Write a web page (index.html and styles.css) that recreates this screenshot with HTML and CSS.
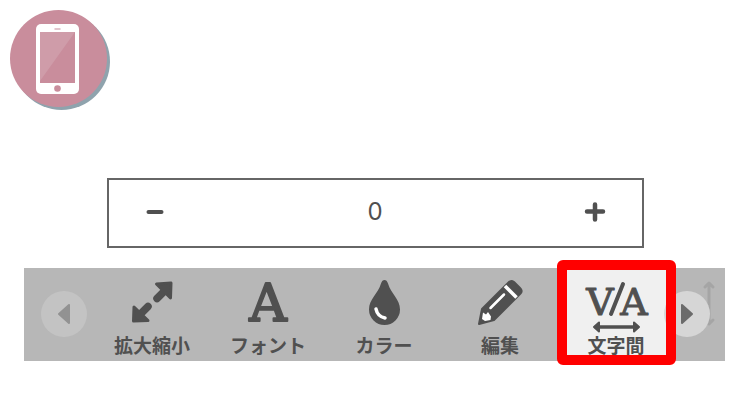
FILE: index.html
```html
<!DOCTYPE html>
<html lang="ja">
<head>
  <meta charset="UTF-8">
  <title>文字間</title>
  <link rel="stylesheet" href="styles.css">
</head>
<body>
  <header class="header">
    <svg class="logo" viewBox="0 0 100 100" aria-hidden="true">
      <circle cx="51.500" cy="51.500" r="48.500" fill="#8fa3ad"/>
      <circle cx="48.500" cy="48.500" r="48.500" fill="#c98d9c"/>
      <rect x="26" y="14" width="43" height="70" rx="5" fill="#fff"/>
      <rect x="30" y="22" width="35" height="51" fill="#c98d9c"/>
      <path d="M30 22h35L30 71z" fill="#cf9ca9"/>
      <path d="M45 19h5" stroke="#d9b3bd" stroke-width="1.500" stroke-linecap="round"/>
      <circle cx="47.500" cy="78.500" r="3.300" fill="#c98d9c"/>
    </svg>
  </header>

  <main>
    <div class="stepper">
      <button class="step" type="button" aria-label="狭くする">
        <svg width="22" height="22" viewBox="0 0 22 22"><path d="M4.500 11h13" stroke-width="4"/></svg>
      </button>
      <output class="value">0</output>
      <button class="step" type="button" aria-label="広くする">
        <svg width="22" height="22" viewBox="0 0 22 22"><path d="M3 10.500h16M11 3.500v15" stroke-width="4.500"/></svg>
      </button>
    </div>

    <nav class="toolbar">
      <button class="arrow prev" type="button" aria-label="前へ">
        <svg width="46" height="46" viewBox="0 0 46 46"><path d="M18 23L28 14v18z"/></svg>
      </button>

      <button class="tool" type="button">
        <svg class="icon" viewBox="0 0 64 54" aria-hidden="true">
          <path d="M37 19.500L45 11.500M28 27.500L20 35.500" stroke-width="7.500"/>
          <path class="solid" d="M36.500 5L51 4L50.500 19zM14 28L13.500 42L28 41.500z" stroke-width="3"/>
        </svg>
        <span class="label">拡大縮小</span>
      </button>

      <button class="tool" type="button">
        <svg class="icon" viewBox="0 0 64 54" aria-hidden="true">
          <text class="letter" x="32" y="42" font-size="52" stroke-width="2">A</text>
        </svg>
        <span class="label">フォント</span>
      </button>

      <button class="tool" type="button">
        <svg class="icon" viewBox="0 0 64 54" aria-hidden="true">
          <path class="fill" d="M32.500 1C31 1 29.800 2 29 4.500C26 15 17 20 17 30.500A15.500 15.500 0 0 0 48 30.500C48 20 39 15 36 4.500C35.200 2 34 1 32.500 1z"/>
          <path class="light" d="M24 30Q25.500 37.500 33 39" stroke-width="3.500"/>
        </svg>
        <span class="label">カラー</span>
      </button>

      <button class="tool" type="button">
        <svg class="icon" viewBox="0 0 64 54" aria-hidden="true">
          <path class="solid" d="M11 45L14 30L40.500 3.500Q43 1 46 3L52 9Q55 12 52.500 14.500L26 41z" stroke-width="2"/>
          <path class="light butt" d="M37 7L48.500 18.500" stroke-width="3.500"/>
          <path class="light" d="M22.500 29L36 15.500" stroke-width="2.500"/>
          <path class="light-fill" d="M15 33.500L18 35.500L20 33L23 37.500L22.500 41L17 42L14 40z"/>
        </svg>
        <span class="label">編集</span>
      </button>

      <button class="tool selected" type="button" aria-pressed="true">
        <svg class="icon" viewBox="0 0 64 54" aria-hidden="true">
          <text class="letter" x="16" y="36" font-size="38" stroke-width="1">V</text>
          <text class="letter" x="50" y="36" font-size="38" stroke-width="1">A</text>
          <path d="M27 35L39 5" stroke-width="4"/>
          <path d="M12 48H53" stroke-width="3.500"/>
          <path class="solid" d="M10 48L15 43.500v9zM55 48L50 43.500v9z" stroke-width="2"/>
        </svg>
        <span class="label">文字間</span>
      </button>

      <button class="tool more" type="button" aria-label="行間">
        <svg width="16" height="54" viewBox="0 0 16 54"><path d="M8 5v38M4 8l4-4 4 4M4 41l4 4 4-4" stroke-width="3"/></svg>
      </button>

      <button class="arrow next" type="button" aria-label="次へ">
        <svg width="46" height="46" viewBox="0 0 46 46"><path d="M28 23L18 14v18z"/></svg>
      </button>
    </nav>
  </main>
</body>
</html>
```
FILE: styles.css
```css
body {
  margin: 0;
  padding-bottom: 38px;
  background-color: #fff;
  color: #505050;
  font-family: "Noto Sans CJK JP", sans-serif;
}

button {
  padding: 0;
  border: 0;
  background: none;
  color: inherit;
  font: inherit;
  cursor: pointer;
}

svg {
  display: block;
  overflow: visible;
  fill: none;
  stroke: currentColor;
  stroke-linecap: round;
  stroke-linejoin: round;
}

.header {
  padding: 10px;
}

.logo {
  width: 100px;
  stroke: none;
}

/* 数値の増減 */
.stepper {
  display: flex;
  justify-content: space-between;
  align-items: center;
  margin: 58px 106px 0 107px;
  padding: 15px 36px 17px 35px;
  border: 2px solid #666;
}

.step {
  padding: 6px 0;
}

.value {
  font-family: Inter, sans-serif;
  font-size: 24px;
  line-height: 32px;
}

/* ツールバー */
.toolbar {
  position: relative;
  display: flex;
  margin: 20px 25px 0 24px;
  padding-left: 70px;
  background-color: #b7b7b7;
}

.tool {
  position: relative;
  display: flex;
  flex: 0 0 116px;
  flex-direction: column;
  align-items: center;
  padding: 11px 0 4px;
}

.icon {
  width: 64px;
  height: 54px;
}

.label {
  font-size: 19px;
  font-weight: bold;
  line-height: 24px;
}

.solid,
.fill,
.letter {
  fill: currentColor;
}

.fill {
  stroke: none;
}

.light {
  stroke: #fff;
}

.butt {
  stroke-linecap: butt;
}

.light-fill {
  fill: #fff;
  stroke: none;
}

.letter {
  font-family: "DejaVu Serif", serif;
  font-weight: normal;
  text-anchor: middle;
}

.selected {
  background-color: #f0f0f0;
}

/* 赤い枠 */
.selected::after {
  content: "";
  position: absolute;
  z-index: 2;
  inset: -8px -2px -4px -1px;
  border: 10px solid #f00;
  border-radius: 6px;
}

.more {
  flex: 1;
  align-items: flex-end;
  padding-right: 8px;
  color: #a5a5a5;
}

.arrow {
  position: absolute;
  z-index: 1;
  top: 23px;
  border-radius: 50%;
}

.arrow path {
  fill: currentColor;
  stroke-width: 2;
}

.prev {
  left: 17px;
  background-color: #c3c3c3;
  color: #929292;
}

.next {
  right: 15px;
  background-color: #d6d6d6;
  color: #6b6b6b;
}
```
